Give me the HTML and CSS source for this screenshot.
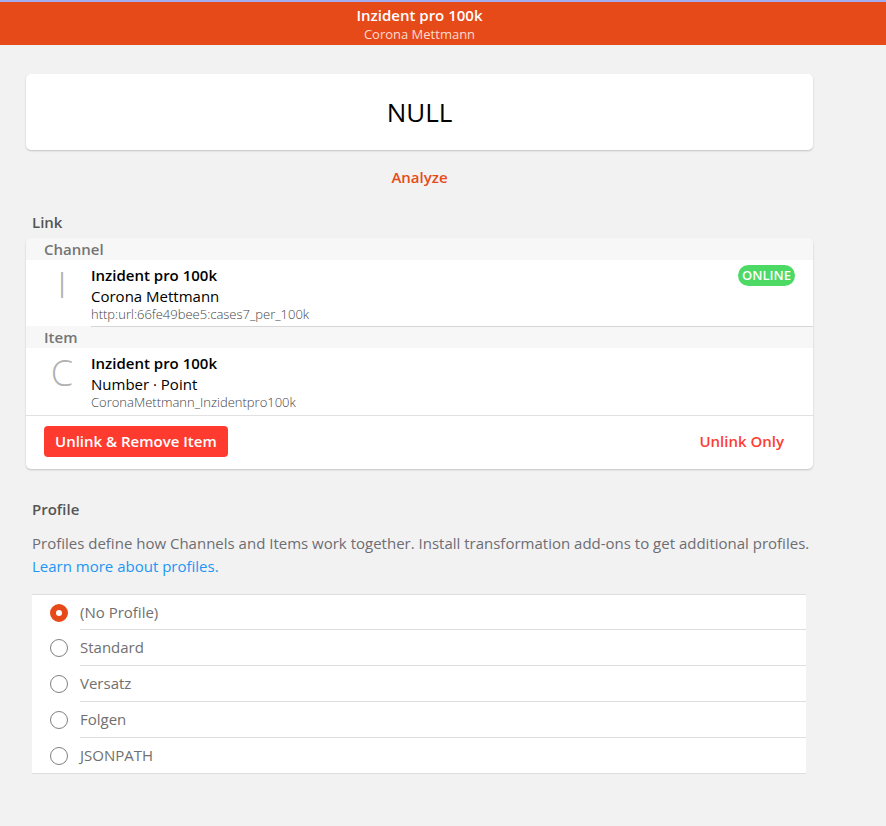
FILE: index.html
```
<!DOCTYPE html>
<html lang="de">
<head>
  <meta charset="UTF-8">
  <meta name="viewport" content="width=device-width, initial-scale=1.0">
  <title>Inzident pro 100k</title>
  <link rel="stylesheet" href="styles.css">
</head>
<body>
  <header class="navbar">
    <h1>Inzident pro 100k</h1>
    <p>Corona Mettmann</p>
  </header>

  <main class="page">
    <section class="card state">NULL</section>
    <button type="button" class="analyze">Analyze</button>

    <h2 class="block-title">Link</h2>
    <section class="card">
      <h3 class="group-title">Channel</h3>
      <div class="item">
        <span class="letter">I</span>
        <div class="item-inner divided">
          <div class="item-text">
            <div class="item-title">Inzident pro 100k</div>
            <div class="item-subtitle">Corona Mettmann</div>
            <div class="item-id">http:url:66fe49bee5:cases7_per_100k</div>
          </div>
          <span class="badge">ONLINE</span>
        </div>
      </div>
      <h3 class="group-title">Item</h3>
      <div class="item">
        <span class="letter">C</span>
        <div class="item-inner">
          <div class="item-text">
            <div class="item-title">Inzident pro 100k</div>
            <div class="item-subtitle">Number · Point</div>
            <div class="item-id">CoronaMettmann_Inzidentpro100k</div>
          </div>
        </div>
      </div>
      <div class="card-footer">
        <button type="button" class="remove">Unlink &amp; Remove Item</button>
        <button type="button" class="unlink">Unlink Only</button>
      </div>
    </section>

    <h2 class="block-title profile-title">Profile</h2>
    <p class="description">Profiles define how Channels and Items work together. Install transformation add-ons to get additional profiles.
      <a href="#">Learn more about profiles.</a></p>

    <form class="profiles">
      <label class="profile"><input type="radio" name="profile" checked><span>(No Profile)</span></label>
      <label class="profile"><input type="radio" name="profile"><span>Standard</span></label>
      <label class="profile"><input type="radio" name="profile"><span>Versatz</span></label>
      <label class="profile"><input type="radio" name="profile"><span>Folgen</span></label>
      <label class="profile"><input type="radio" name="profile"><span>JSONPATH</span></label>
    </form>
  </main>
</body>
</html>
```
FILE: styles.css
```
* {
  box-sizing: border-box;
}
body {
  margin: 0;
  font-family: "Open Sans", "Noto Sans", sans-serif;
  font-size: 15px;
  background-color: #f2f2f2;
  color: #000;
}
h1, h2, h3, p {
  margin: 0;
}
button {
  border: none;
  background: none;
  font-family: inherit;
  font-size: 15px;
  font-weight: 600;
  cursor: pointer;
}
.navbar {
  background-color: #e64a19;
  border-top: 2px solid #a3aef0;
  color: white;
  text-align: center;
  padding: 3px 47px 2px 0;
}
.navbar h1 {
  font-size: 15px;
  font-weight: 600;
  line-height: 20px;
}
.navbar p {
  font-size: 13px;
  line-height: 18px;
  color: #fbdcd2;
}
.page {
  padding: 29px 73px 52px 26px;
}
.card {
  background-color: white;
  border-radius: 5px;
  box-shadow: 0 1px 2px rgba(0,0,0,0.2);
  overflow: hidden;
}
.state {
  text-align: center;
  font-size: 26px;
  line-height: 36px;
  padding: 20px 0;
}
.analyze {
  display: block;
  width: 100%;
  padding: 0;
  margin-top: 12px;
  line-height: 30px;
  color: #e64a19;
}
.block-title {
  font-size: 15px;
  font-weight: 600;
  line-height: 20px;
  margin: 20px 6px 6px;
  color: #555;
}
.group-title {
  font-size: 15px;
  font-weight: 600;
  line-height: 22px;
  padding: 0 18px;
  background-color: #f7f7f7;
  color: #757575;
}
.item {
  display: flex;
  padding-left: 18px;
}
.letter {
  width: 36px;
  margin-right: 11px;
  text-align: center;
  font-size: 36px;
  font-weight: 300;
  line-height: 50px;
  color: #b0b0b0;
}
.item-inner {
  flex: 1;
  display: flex;
  justify-content: space-between;
  align-items: flex-start;
  padding: 5px 18px 3px 0;
  border-bottom: 1px solid transparent;
}
.divided {
  border-bottom-color: #d6d6d6;
  margin-bottom: -1px;
  z-index: 1;
}
.item-title {
  font-weight: 600;
  line-height: 21px;
}
.item-subtitle {
  line-height: 20px;
}
.item-id {
  font-size: 13px;
  line-height: 17px;
  font-weight: 300;
  color: #444;
}
.badge {
  background-color: #4cd964;
  color: white;
  border-radius: 11px;
  padding: 0 4px;
  font-size: 13px;
  font-weight: 600;
  line-height: 21px;
}
.card-footer {
  display: flex;
  justify-content: space-between;
  align-items: center;
  border-top: 1px solid #e1e1e1;
  padding: 10px 18px 12px;
}
.remove,
.unlink {
  line-height: 31px;
  padding: 0 11px;
  border-radius: 4px;
}
.remove {
  background-color: #ff3b30;
  color: white;
}
.unlink {
  color: #ff3b30;
}
.profile-title {
  margin-top: 30px;
}
.description {
  padding: 7px 0 0 6px;
  line-height: 23px;
  color: #6d6d72;
}
.description a {
  display: block;
  color: #2196f3;
  text-decoration: none;
}
.profiles {
  margin: 16px 7px 0 6px;
  background-color: white;
  border-top: 1px solid #dedede;
  border-bottom: 1px solid #dedede;
}
.profile {
  display: flex;
  align-items: center;
  padding-left: 18px;
  color: #707070;
  cursor: pointer;
}
.profile span {
  flex: 1;
  line-height: 35px;
  border-bottom: 1px solid #dedede;
}
.profile:first-child span {
  line-height: 34px;
}
.profile:last-child span {
  border-bottom: none;
}
.profile input {
  appearance: none;
  width: 18px;
  height: 18px;
  margin: 0 12px 0 0;
  border: 1px solid #808080;
  border-radius: 50%;
}
.profile input:checked {
  border: 6px solid #e64a19;
}
```
